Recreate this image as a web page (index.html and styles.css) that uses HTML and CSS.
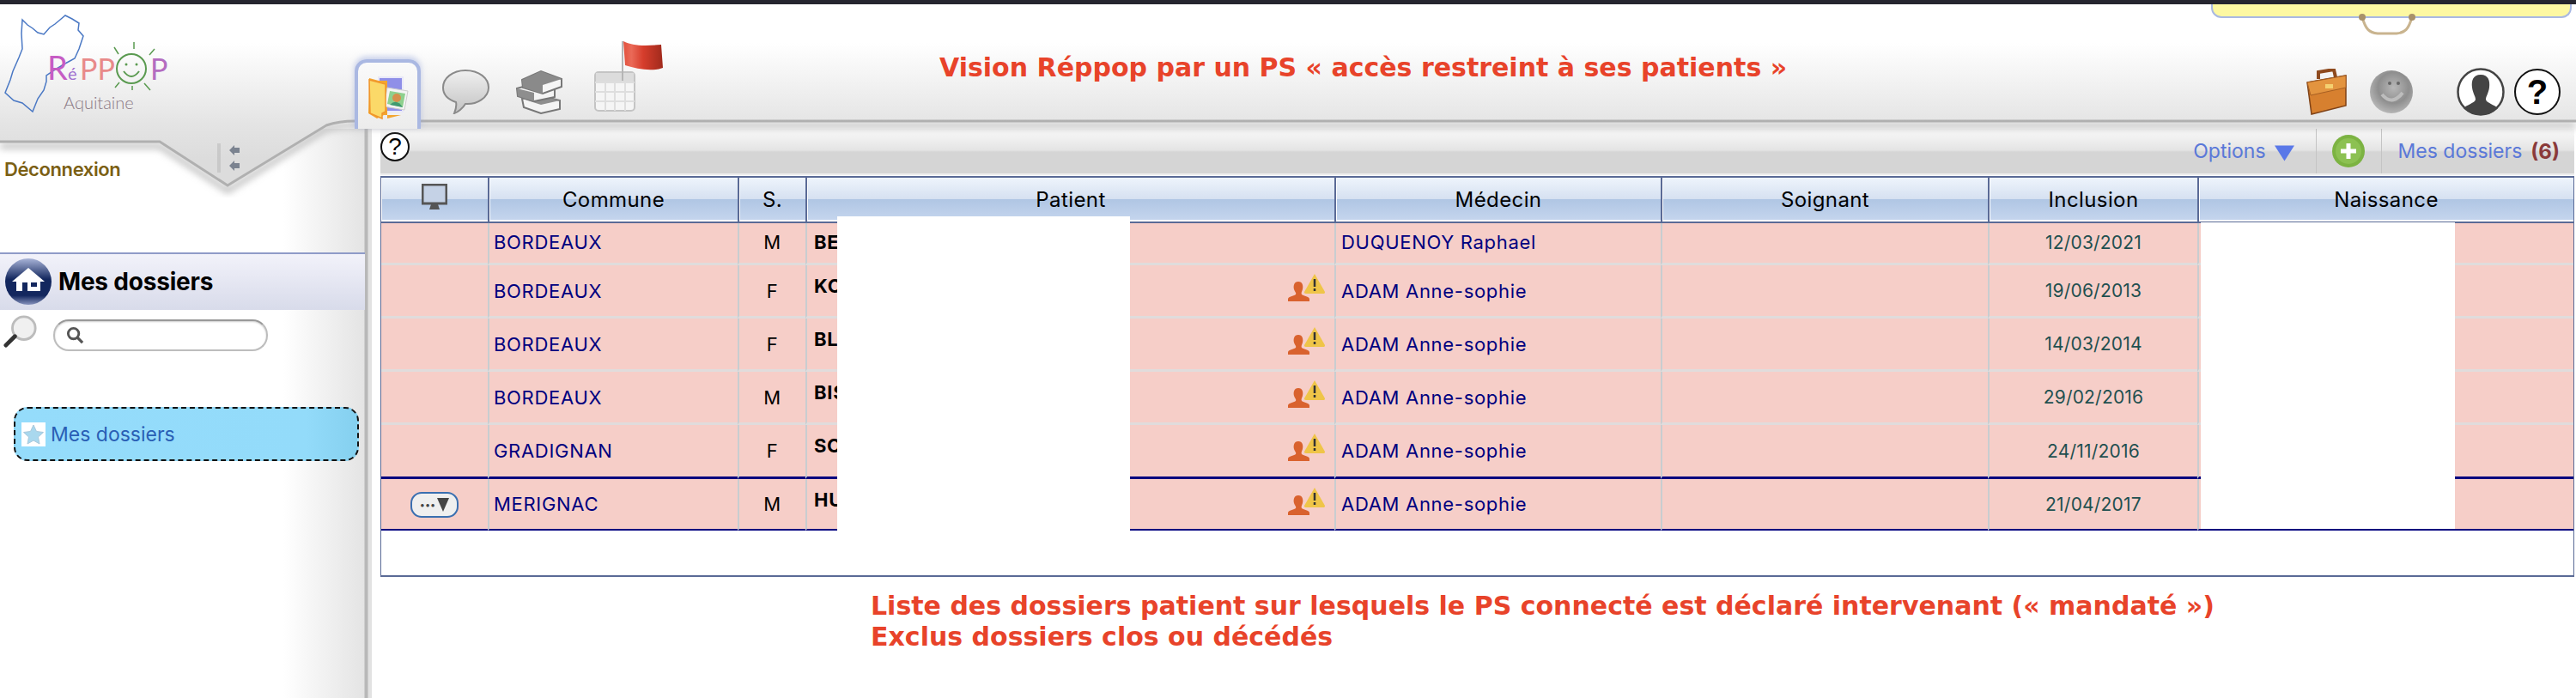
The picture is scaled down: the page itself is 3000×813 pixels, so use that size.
FILE: index.html
```html
<!DOCTYPE html>
<html lang="fr">
<head>
<meta charset="utf-8">
<title>Réppop Aquitaine</title>
<link rel="stylesheet" href="styles.css">
</head>
<body>
<div class="topbar"></div>
<div class="drawer">
  <svg class="drawer-handle" viewBox="0 0 70 26"><path d="M6 4 C10 18 14 22 24 23 H46 C56 22 60 18 64 4" fill="none" stroke="#c9b48f" stroke-width="3"/><circle cx="6" cy="4" r="4" fill="#a8916a"/><circle cx="64" cy="4" r="4" fill="#a8916a"/></svg>
</div>
<svg class="header-bg" viewBox="0 0 3000 230" preserveAspectRatio="none">
  <defs>
    <linearGradient id="hg" gradientUnits="userSpaceOnUse" x1="0" y1="50" x2="0" y2="185">
      <stop offset="0" stop-color="#ffffff"/><stop offset="0.7" stop-color="#e4e4e4"/><stop offset="1" stop-color="#dcdcdc"/>
    </linearGradient>
    <linearGradient id="fl" x1="0" y1="0" x2="1" y2="0"><stop offset="0" stop-color="#e2503c"/><stop offset="0.2" stop-color="#ea6a58"/><stop offset="0.5" stop-color="#d63d2c"/><stop offset="1" stop-color="#a02a1c"/></linearGradient>
    <filter id="sh" x="-5%" y="-20%" width="110%" height="140%"><feGaussianBlur stdDeviation="4"/></filter>
  </defs>
  <path d="M0 170 H186 L265 222 L380 150 Q395 146 413 146 H3000" fill="none" stroke="#aaa" stroke-width="5" filter="url(#sh)"/>
  <path d="M0 165 H186 L265 216 L380 146 Q395 141 413 141 H3000 V0 H0 Z" fill="url(#hg)"/>
  <path d="M0 165 H186 L265 216 L380 146 Q395 141 413 141 H3000" fill="none" stroke="#b0b0b0" stroke-width="3"/>
</svg>
<header class="header">
  <div class="logo">
    <svg class="logo-art" viewBox="0 0 200 130">
      <path d="M26 18 L32 24 L38 28 L44 33 L51 35 L58 27 L64 23 L70 18 L76 13 L84 17 L92 22 L91 30 L97 37 L94 46 L92 52 L87 63 L76 69 L66 75 L54 83 L54 90 L51 100 L44 110 L38 125 L26 115 L16 112 L6 103 L12 88 L15 78 L22 62 L26 52 L25 34 Z" fill="none" stroke="#4a78c4" stroke-width="1.5"/>
      <text x="55" y="88" class="lg lg-r">R</text>
      <text x="79" y="88" class="lg lg-e">é</text>
      <text x="93" y="88" class="lg lg-p">PP</text>
      <circle cx="153" cy="75" r="17" fill="none" stroke="#5a9a50" stroke-width="2"/>
      <path d="M144 78 Q153 90 162 78" fill="none" stroke="#5a9a50" stroke-width="2"/>
      <circle cx="147" cy="70" r="1.5" fill="#5a9a50"/><circle cx="159" cy="70" r="1.5" fill="#5a9a50"/>
      <path d="M133 50 L138 58 M156 44 V52 M180 52 L174 59 M134 97 L139 91 M154 100 V95 M175 100 L168 92" stroke="#5a9a50" stroke-width="1.5"/>
      <text x="175" y="88" class="lg lg-o">P</text>
      <text x="74" y="122" class="lg-a">Aquitaine</text>
    </svg>
  </div>
  <div class="tab tab-active">
    <svg class="icon-folder" viewBox="0 0 50 52">
      <rect x="14" y="2" width="28" height="40" fill="#8f8fe8" stroke="#e8e8f8" stroke-width="2"/>
      <path d="M3 3 L14 6 H24 V50 L40 46 H20 L12 50 L2 44 Z" fill="#f3a52f"/>
      <path d="M24 14 L48 18 L44 40 L20 36 Z" fill="#f4f4f4" stroke="#ccc"/>
      <path d="M27 18 L45 21 L42 37 L24 33 Z" fill="#8ed08e"/>
      <circle cx="35" cy="26" r="5" fill="#d68f4c"/><path d="M27 34 Q35 26 42 37 Z" fill="#3f9a70"/>
      <path d="M3 5 L22 10 V42 L18 44 V50 L4 44 Z" fill="#fbd968" stroke="#f0952c" stroke-width="1.5"/>
    </svg>
  </div>
  <svg class="icon-bubble" viewBox="0 0 55 53">
    <defs><linearGradient id="bb" x1="0" y1="0" x2="0" y2="1"><stop offset="0" stop-color="#f0f0f0"/><stop offset="1" stop-color="#c2c2c2"/></linearGradient></defs>
    <path d="M27 2 C43 2 54 11 54 22 C54 34 40 42 27 41 C24 46 18 51 14 52 C16 47 17 43 16 39 C7 36 1 30 1 22 C1 11 12 2 27 2 Z" fill="url(#bb)" stroke="#8a8a8a" stroke-width="2"/>
  </svg>
  <svg class="icon-books" viewBox="0 0 56 52">
    <path d="M8 34 L28 30 L52 36 V46 L30 51 L10 44 Z" fill="#f4f4f4" stroke="#777" stroke-width="2"/>
    <path d="M8 34 L28 30 L52 36 L30 41 Z" fill="#8e8e8e"/>
    <path d="M2 22 L24 16 L46 21 V32 L22 37 L3 31 Z" fill="#f4f4f4" stroke="#777" stroke-width="2"/>
    <path d="M2 22 L22 27 V37 L3 31 Z" fill="#8e8e8e"/>
    <path d="M8 12 L30 2 L54 11 V20 L32 28 L9 21 Z" fill="#f6f6f6" stroke="#777" stroke-width="2"/>
    <path d="M8 12 L30 2 L54 11 L32 18 Z M8 12 L32 18 V28 L9 21 Z" fill="#8a8a8a"/>
  </svg>
  <svg class="icon-calendar" viewBox="0 0 80 84">
    <rect x="1" y="38" width="46" height="45" rx="4" fill="#f5f5f5" stroke="#c4c4c4" stroke-width="2"/>
    <rect x="2" y="39" width="44" height="10" fill="#dcdcdc"/>
    <path d="M1 50 H47 M1 61 H47 M1 72 H47 M13 50 V83 M24 50 V83 M36 50 V83" stroke="#dedede" stroke-width="2"/>
    <path d="M33 2 V48" stroke="#b5b5b5" stroke-width="2"/>
    <path d="M34 2 C44 7 56 8 78 6 L80 33 C66 38 50 34 36 30 Z" fill="url(#fl)"/>
  </svg>
  <div class="header-title">Vision Réppop par un PS « accès restreint à ses patients »</div>
  <div class="header-tools">
    <svg class="icon-case" viewBox="0 0 48 54">
      <path d="M14 12 V4 L32 1 L34 10" fill="none" stroke="#8e4a1e" stroke-width="4"/>
      <path d="M1 16 L46 8 V43 L6 53 Z" fill="#d7802f" stroke="#7f4217" stroke-width="1.5"/>
      <path d="M1 16 L46 8 V22 L5 31 Z" fill="#e3943f" stroke="#a85f22"/>
      <rect x="22" y="18" width="9" height="5" fill="#f4d070"/>
    </svg>
    <svg class="icon-ball" viewBox="0 0 50 50">
      <defs><radialGradient id="bl" cx="0.55" cy="0.4" r="0.6"><stop offset="0" stop-color="#b8b8b8"/><stop offset="0.6" stop-color="#8e8e8e"/><stop offset="1" stop-color="#b5b5b5"/></radialGradient></defs>
      <circle cx="25" cy="25" r="25" fill="url(#bl)"/>
      <circle cx="23" cy="15" r="2" fill="#666"/><circle cx="33" cy="15" r="2" fill="#666"/>
      <path d="M14 28 Q26 42 38 26" fill="none" stroke="#bdbdbd" stroke-width="4"/>
    </svg>
    <svg class="icon-user" viewBox="0 0 56 56">
      <circle cx="28" cy="28" r="26.5" fill="#fff" stroke="#444" stroke-width="2.5"/>
      <path d="M28 8 C37 8 39 15 38 23 C37 30 34 33 34 37 C35 41 44 43 48 47 C43 52 36 55 28 55 C20 55 13 52 8 47 C12 43 21 41 22 37 C22 33 19 30 18 23 C17 15 19 8 28 8 Z" fill="#444"/>
    </svg>
    <span class="help help-large">?</span>
  </div>
</header>
<div class="main">
  <aside class="sidebar">
    <div class="logout">Déconnexion</div>
    <svg class="collapse" viewBox="0 0 30 36"><path d="M1 0 V34 M3 0 V34" stroke="#b5b5b5" stroke-width="1"/><path d="M14 8 L20 2 V5 H26 V11 H20 V14 Z M14 26 L20 20 V23 H26 V29 H20 V32 Z" fill="#7b8390"/></svg>
    <div class="side-head">
      <svg class="icon-home" viewBox="0 0 54 54">
        <defs><linearGradient id="hm" x1="0" y1="0" x2="0" y2="1"><stop offset="0" stop-color="#a9b4d8"/><stop offset="0.45" stop-color="#13275e"/><stop offset="0.8" stop-color="#13275e"/><stop offset="1" stop-color="#8793bd"/></linearGradient></defs>
        <circle cx="27" cy="27" r="27" fill="url(#hm)"/>
        <path d="M27 11 L46 27 H41 V38 H13 V27 H8 Z" fill="#fff"/>
        <rect x="20" y="28" width="6" height="10" fill="#13275e"/><rect x="30" y="28" width="7" height="5" fill="#13275e"/>
      </svg>
      <span class="side-title">Mes dossiers</span>
    </div>
    <div class="search">
      <svg class="icon-lens" viewBox="0 0 42 42">
        <circle cx="25" cy="17" r="14" fill="#f0f0f0" stroke="#bcbcbc" stroke-width="3"/>
        <path d="M14 27 L3 38" stroke="#333" stroke-width="5" stroke-linecap="round"/>
      </svg>
      <div class="search-field">
        <svg class="icon-mini" viewBox="0 0 22 22"><circle cx="9" cy="9" r="6.5" fill="none" stroke="#555" stroke-width="3"/><path d="M14 14 L20 20" stroke="#555" stroke-width="3.5"/></svg>
      </div>
    </div>
    <div class="menu-item">
      <svg class="icon-star" viewBox="0 0 28 28"><rect width="28" height="28" fill="#fff"/><path d="M14 3 L17.5 10.5 L25.5 11.5 L19.5 17 L21 25 L14 21 L7 25 L8.5 17 L2.5 11.5 L10.5 10.5 Z" fill="#a9d8ee" stroke="#a8c8dc" stroke-width="1"/></svg>
      <span>Mes dossiers</span>
    </div>
  </aside>
  <main class="content">
    <div class="toolbar">
      <span class="help help-small">?</span>
      <div class="toolbar-right">
        <span class="options">Options</span>
        <svg class="icon-arrow" viewBox="0 0 24 20"><path d="M0 1 H24 L12 20 Z" fill="#5a78e8"/></svg>
        <div class="tool-cell">
          <svg class="icon-plus" viewBox="0 0 38 38"><circle cx="19" cy="19" r="19" fill="#7cb342"/><circle cx="19" cy="19" r="15" fill="#8cc152"/><path d="M19 10 V28 M10 19 H28" stroke="#fff" stroke-width="5"/></svg>
        </div>
        <span class="count-label">Mes dossiers</span>
        <span class="count">(6)</span>
      </div>
    </div>
    <div class="panel">
      <table class="grid">
        <colgroup>
          <col class="c-act"><col class="c-com"><col class="c-sex"><col class="c-pat"><col class="c-med"><col class="c-soi"><col class="c-inc"><col class="c-nai">
        </colgroup>
        <thead>
          <tr>
            <th><svg class="icon-screen" viewBox="0 0 30 32"><rect x="1" y="1" width="28" height="22" fill="#c5d2e6" stroke="#555" stroke-width="3"/><path d="M11 24 H19 L21 30 H9 Z" fill="#555"/></svg></th>
            <th>Commune</th><th>S.</th><th>Patient</th><th>Médecin</th><th>Soignant</th><th>Inclusion</th><th>Naissance</th>
          </tr>
        </thead>
        <tbody>
          <tr class="r-first">
            <td></td><td class="com">BORDEAUX</td><td class="sex">M</td><td class="pat"><b>BES</b></td><td class="med">DUQUENOY Raphael</td><td></td><td class="date">12/03/2021</td><td></td>
          </tr>
          <tr>
            <td></td><td class="com">BORDEAUX</td><td class="sex">F</td><td class="pat"><b>KO</b><svg class="icon-warn" viewBox="0 0 44 34"><path d="M13 10 C18 10 19 15 18 19 C17 22 16 23 17 25 C20 27 25 27 26 30 V33 H1 V30 C2 27 7 27 10 25 C11 23 9 22 8 19 C7 15 8 10 13 10 Z" fill="#d9622e"/><path d="M32 1 L44 22 C44 24 43 24 42 24 H22 C20 24 20 23 20 22 Z" fill="#efc548"/><path d="M32 7 V16 M32 18 V21" stroke="#333" stroke-width="2.5"/></svg></td><td class="med">ADAM Anne-sophie</td><td></td><td class="date">19/06/2013</td><td></td>
          </tr>
          <tr>
            <td></td><td class="com">BORDEAUX</td><td class="sex">F</td><td class="pat"><b>BLA</b><svg class="icon-warn" viewBox="0 0 44 34"><path d="M13 10 C18 10 19 15 18 19 C17 22 16 23 17 25 C20 27 25 27 26 30 V33 H1 V30 C2 27 7 27 10 25 C11 23 9 22 8 19 C7 15 8 10 13 10 Z" fill="#d9622e"/><path d="M32 1 L44 22 C44 24 43 24 42 24 H22 C20 24 20 23 20 22 Z" fill="#efc548"/><path d="M32 7 V16 M32 18 V21" stroke="#333" stroke-width="2.5"/></svg></td><td class="med">ADAM Anne-sophie</td><td></td><td class="date">14/03/2014</td><td></td>
          </tr>
          <tr>
            <td></td><td class="com">BORDEAUX</td><td class="sex">M</td><td class="pat"><b>BIS</b><svg class="icon-warn" viewBox="0 0 44 34"><path d="M13 10 C18 10 19 15 18 19 C17 22 16 23 17 25 C20 27 25 27 26 30 V33 H1 V30 C2 27 7 27 10 25 C11 23 9 22 8 19 C7 15 8 10 13 10 Z" fill="#d9622e"/><path d="M32 1 L44 22 C44 24 43 24 42 24 H22 C20 24 20 23 20 22 Z" fill="#efc548"/><path d="M32 7 V16 M32 18 V21" stroke="#333" stroke-width="2.5"/></svg></td><td class="med">ADAM Anne-sophie</td><td></td><td class="date">29/02/2016</td><td></td>
          </tr>
          <tr class="r-sep">
            <td></td><td class="com">GRADIGNAN</td><td class="sex">F</td><td class="pat"><b>SO</b><svg class="icon-warn" viewBox="0 0 44 34"><path d="M13 10 C18 10 19 15 18 19 C17 22 16 23 17 25 C20 27 25 27 26 30 V33 H1 V30 C2 27 7 27 10 25 C11 23 9 22 8 19 C7 15 8 10 13 10 Z" fill="#d9622e"/><path d="M32 1 L44 22 C44 24 43 24 42 24 H22 C20 24 20 23 20 22 Z" fill="#efc548"/><path d="M32 7 V16 M32 18 V21" stroke="#333" stroke-width="2.5"/></svg></td><td class="med">ADAM Anne-sophie</td><td></td><td class="date">24/11/2016</td><td></td>
          </tr>
          <tr class="r-last">
            <td class="act"><span class="act-btn"><i class="dots">•••</i><i class="tri"></i></span></td><td class="com">MERIGNAC</td><td class="sex">M</td><td class="pat"><b>HU</b><svg class="icon-warn" viewBox="0 0 44 34"><path d="M13 10 C18 10 19 15 18 19 C17 22 16 23 17 25 C20 27 25 27 26 30 V33 H1 V30 C2 27 7 27 10 25 C11 23 9 22 8 19 C7 15 8 10 13 10 Z" fill="#d9622e"/><path d="M32 1 L44 22 C44 24 43 24 42 24 H22 C20 24 20 23 20 22 Z" fill="#efc548"/><path d="M32 7 V16 M32 18 V21" stroke="#333" stroke-width="2.5"/></svg></td><td class="med">ADAM Anne-sophie</td><td></td><td class="date">21/04/2017</td><td></td>
          </tr>
        </tbody>
      </table>
      <div class="mask mask-patient"></div>
      <div class="mask mask-birth"></div>
    </div>
    <div class="notes">
      <p>Liste des dossiers patient sur lesquels le PS connecté est déclaré intervenant (« mandaté »)</p>
      <p>Exclus dossiers clos ou décédés</p>
    </div>
  </main>
</div>
</body>
</html>
```
FILE: styles.css
```css
* { box-sizing: border-box; }
html, body { margin: 0; padding: 0; height: 100%; background: #fff; overflow: hidden; }
body { font-family: Inter, "Liberation Sans", sans-serif; position: relative; }

.topbar { height: 5px; background: #25252f; position: relative; z-index: 3; }

.drawer { position: absolute; top: 5px; right: 5px; width: 420px; height: 16px; background: #fdf8a2; border: 2px solid #a9b9e2; border-top: 0; border-radius: 0 0 12px 12px; z-index: 4; }
.drawer-handle { position: absolute; left: 168px; top: 11px; width: 70px; height: 26px; }

.header-bg { position: absolute; left: 0; top: 0; width: 3000px; height: 230px; z-index: 1; pointer-events: none; }

.header { position: relative; z-index: 2; height: 145px; display: flex; align-items: flex-end; }
.logo { width: 413px; align-self: flex-start; }
.logo-art { display: block; width: 200px; height: 130px; }
.lg { font-family: Lato, sans-serif; font-size: 38px; font-weight: 400; }
.lg-r { fill: #c65cc4; }
.lg-e { fill: #a070d0; font-size: 20px; }
.lg-p { fill: #e88a8a; font-size: 34px; }
.lg-o { fill: #b46cc0; font-size: 34px; }
.lg-a { font-family: Lato, sans-serif; font-size: 20px; font-weight: 300; fill: #8c7a86; }

.tab { width: 77px; height: 81px; display: flex; justify-content: center; }
.tab-active { border: 4px solid #aab8e2; border-bottom: 0; border-radius: 14px 14px 0 0; box-shadow: 0 -3px 6px rgba(150, 165, 220, .5); padding-top: 15px; background: linear-gradient(#fafafa, #ececec); }
.icon-folder { width: 50px; height: 52px; }
.icon-bubble { width: 55px; height: 53px; margin: 0 0 17px 25px; }
.icon-books { width: 56px; height: 52px; margin: 0 0 17px 30px; }
.icon-calendar { width: 80px; height: 84px; margin: 0 0 20px 36px; }
.header-title { align-self: flex-start; margin: 56px 0 0 322px; font-family: "DejaVu Sans", sans-serif; font-weight: 700; font-size: 30px; color: #e8432a; white-space: nowrap; }
.header-tools { margin-left: auto; display: flex; align-items: center; padding: 0 18px 15px 0; }
.icon-case { width: 48px; height: 54px; }
.icon-ball { width: 50px; height: 50px; margin-left: 26px; }
.icon-user { width: 56px; height: 56px; margin-left: 51px; }

.help { display: flex; align-items: center; justify-content: center; border: 2px solid #111; border-radius: 50%; background: #fff; color: #000; font-family: "Liberation Sans", sans-serif; font-weight: 700; }
.help-large { width: 54px; height: 54px; margin-left: 11px; font-size: 40px; }
.help-small { width: 34px; height: 34px; font-size: 28px; font-weight: 400; margin-top: 4px; flex: none; }

.main { display: flex; height: 663px; }

.sidebar { position: relative; width: 433px; flex: none; padding-top: 31px; background: linear-gradient(90deg, #fff 0, #fff 330px, #e4e4e4 424px, #b8b8b8 425px, #b8b8b8 428px, #e2e2e2 429px, #e2e2e2 433px); }
.logout { height: 32px; padding-left: 5px; font-size: 22px; font-weight: 600; line-height: 32px; color: #7b5f14; letter-spacing: -.4px; position: relative; z-index: 2; }
.collapse { position: absolute; left: 253px; top: 17px; width: 30px; height: 36px; z-index: 3; }
.side-head { position: relative; width: 425px; height: 67px; margin-top: 81px; padding: 5px 0 0 6px; display: flex; align-items: flex-start; gap: 8px; border-top: 2px solid #8f9bc8; background: linear-gradient(#f2f2fa, #d8dbea); }
.icon-home { width: 54px; height: 54px; flex: none; }
.side-title { font-size: 28px; font-weight: 700; color: #000; line-height: 54px; letter-spacing: -.2px; }
.search { display: flex; align-items: flex-start; padding: 5px 0 0 4px; }
.icon-lens { width: 40px; height: 40px; flex: none; }
.search-field { width: 250px; height: 37px; margin: 6px 0 0 18px; padding-left: 13px; display: flex; align-items: center; border: 2px solid #bdbdbd; border-top-color: #999; border-radius: 18px; background: #fff; box-shadow: inset 0 1px 2px rgba(0, 0, 0, .2); }
.icon-mini { width: 21px; height: 21px; }
.menu-item { width: 402px; height: 63px; margin: 65px 0 0 16px; padding-left: 7px; display: flex; align-items: center; gap: 6px; background: linear-gradient(90deg, #95dcfb, #93dbfa 85%, #85d0ef); border: 2px dashed #111; border-radius: 16px; font-size: 23px; color: #2a5fb5; }
.icon-star { width: 28px; height: 28px; flex: none; }

.content { flex: 1; min-width: 0; padding: 0 2px 0 10px; }

.toolbar { height: 54px; display: flex; align-items: flex-start; border-bottom: 2px solid #eee; background: linear-gradient(#fafafa 0, #e4e4e4 48%, #d5d5d5 52%, #d5d5d5 100%); }
.toolbar-right { margin-left: auto; height: 100%; display: flex; align-items: center; padding-right: 17px; }
.options { font-size: 23px; color: #5a78d8; }
.icon-arrow { width: 23px; height: 20px; margin: 4px 25px 0 10px; }
.tool-cell { width: 77px; height: 100%; display: flex; align-items: center; justify-content: center; border: 0 solid #c4c4c4; border-width: 0 1px; }
.icon-plus { width: 38px; height: 38px; }
.count-label { margin-left: 19px; font-size: 23px; color: #5a78d8; }
.count { margin-left: 10px; font-size: 24px; font-weight: 700; color: #8a3a3a; }

.panel { position: relative; height: 467px; margin-top: 1px; background: #fff; border: 0 solid #5a6a96; border-width: 0 1px 2px 1px; }
.grid { width: 100%; table-layout: fixed; border-collapse: separate; border-spacing: 0; }
.c-act { width: 124px; } .c-com { width: 291px; } .c-sex { width: 79px; } .c-pat { width: 616px; }
.c-med { width: 380px; } .c-soi { width: 381px; } .c-inc { width: 244px; }

th { height: 55px; padding: 0; border-top: 2px solid #5a6a96; border-bottom: 2px solid #5a6a96; border-left: 2px solid #5a6a96; box-shadow: inset 0 -2px 0 #fff, inset 1px 0 0 #fff; font-size: 24px; font-weight: 400; letter-spacing: .4px; color: #000; text-align: center; vertical-align: middle; background: linear-gradient(#eef4fc 0, #d6e1f1 48%, #b0c6e4 50%, #c6d6ee 100%); }
th:first-child { border-left: 0; }
.icon-screen { display: block; width: 30px; height: 32px; margin: -6px auto 0; }

td { height: 62px; padding: 0; border-bottom: 3px solid #e0dcdc; border-left: 2px solid #c8cdd0; background: #f6cec8; font-size: 22px; letter-spacing: .7px; color: #00007f; vertical-align: middle; }
td:first-child { border-left: 0; }
.r-first td { height: 49px; padding-bottom: 2px; }
.r-sep td { height: 63px; border-bottom: 3px solid #00007f; }
.r-last td { height: 60px; border-bottom: 2px solid #00007f; }
.com { padding-left: 5px; }
.sex { text-align: center; color: #000; }
.med { padding-left: 6px; }
.date { text-align: center; color: #1f5050; font-size: 21px; letter-spacing: .2px; }
.act { text-align: center; }
.pat { position: relative; padding-left: 8px; color: #000; vertical-align: top; padding-top: 11px; }
.r-first .pat { padding-top: 9px; }
.pat b { font-weight: 700; }
.icon-warn { position: absolute; right: 11px; top: 9px; width: 44px; height: 34px; }

.act-btn { display: inline-flex; align-items: center; justify-content: center; gap: 2px; width: 56px; height: 30px; border: 2px solid #3a6fb0; border-radius: 13px; background: #efefef; letter-spacing: 0; }
.dots { font-style: normal; font-size: 11px; color: #444; letter-spacing: 0; }
.tri { width: 0; height: 0; border: 7px solid transparent; border-top: 16px solid #444; border-bottom: 0; }

.mask { position: absolute; background: #fff; }
.mask-patient { left: 531px; top: 47px; width: 341px; height: 366px; }
.mask-birth { left: 2119px; top: 54px; width: 296px; height: 357px; }

.notes { margin: 16px 0 0 571px; font-family: "DejaVu Sans", sans-serif; font-weight: 700; font-size: 30px; line-height: 36px; color: #e8432a; white-space: nowrap; }
.notes p { margin: 0; }
```
